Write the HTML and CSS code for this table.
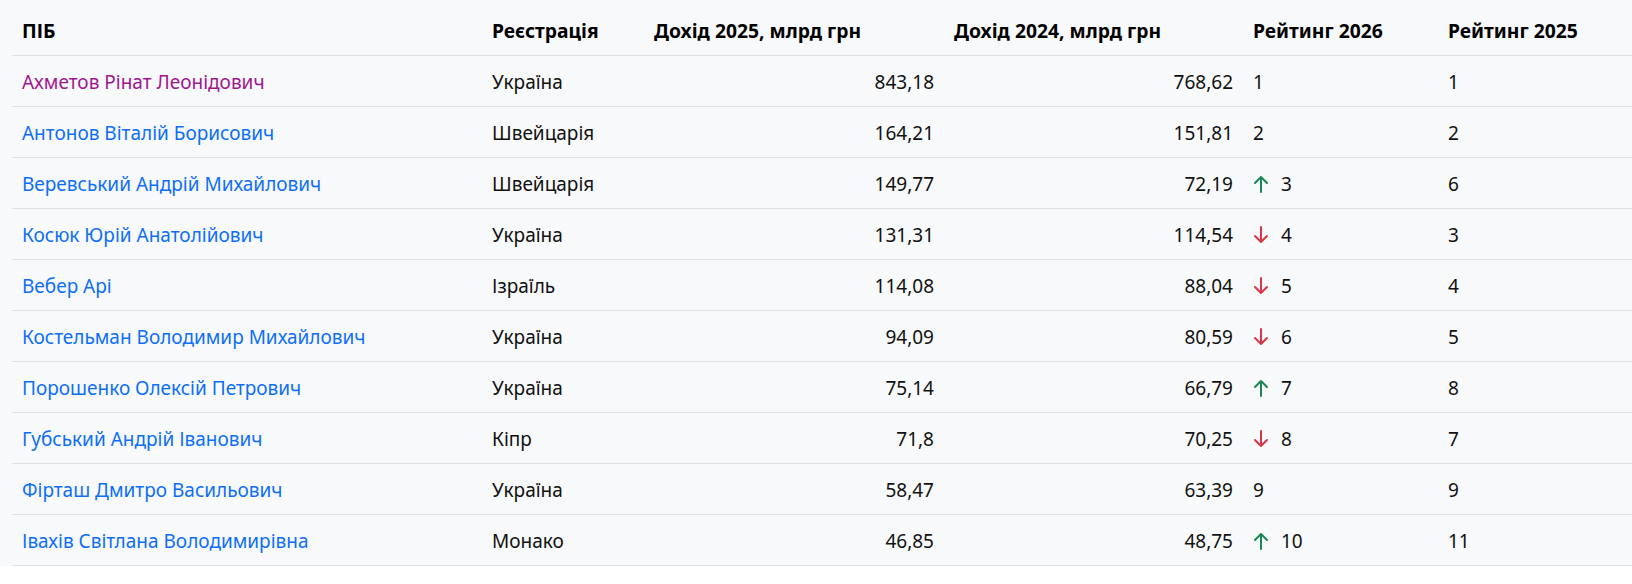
FILE: index.html
```html
<!DOCTYPE html>
<html lang="uk">
<head>
<meta charset="utf-8">
<title>Рейтинг</title>
<link rel="stylesheet" href="styles.css">
</head>
<body>
<div class="wrap">
<table class="rating">
<colgroup>
<col class="c-name"><col class="c-reg"><col class="c-inc"><col class="c-inc2"><col class="c-r26"><col class="c-r25">
</colgroup>
<thead>
<tr><th>ПІБ</th><th>Реєстрація</th><th>Дохід 2025, млрд грн</th><th>Дохід 2024, млрд грн</th><th>Рейтинг 2026</th><th>Рейтинг 2025</th></tr>
</thead>
<tbody>
<tr><td><a class="visited" href="#">Ахметов Рінат Леонідович</a></td><td>Україна</td><td class="num">843,18</td><td class="num">768,62</td><td>1</td><td>1</td></tr>
<tr><td><a href="#">Антонов Віталій Борисович</a></td><td>Швейцарія</td><td class="num">164,21</td><td class="num">151,81</td><td>2</td><td>2</td></tr>
<tr><td><a href="#">Веревський Андрій Михайлович</a></td><td>Швейцарія</td><td class="num">149,77</td><td class="num">72,19</td><td><span class="rank"><svg class="arr up" viewBox="0 0 16 18"><path d="M8 17V2M2 8l6-6 6 6"/></svg>3</span></td><td>6</td></tr>
<tr><td><a href="#">Косюк Юрій Анатолійович</a></td><td>Україна</td><td class="num">131,31</td><td class="num">114,54</td><td><span class="rank"><svg class="arr down" viewBox="0 0 16 18"><path d="M8 1v15M2 10l6 6 6-6"/></svg>4</span></td><td>3</td></tr>
<tr><td><a href="#">Вебер Арі</a></td><td>Ізраїль</td><td class="num">114,08</td><td class="num">88,04</td><td><span class="rank"><svg class="arr down" viewBox="0 0 16 18"><path d="M8 1v15M2 10l6 6 6-6"/></svg>5</span></td><td>4</td></tr>
<tr><td><a href="#">Костельман Володимир Михайлович</a></td><td>Україна</td><td class="num">94,09</td><td class="num">80,59</td><td><span class="rank"><svg class="arr down" viewBox="0 0 16 18"><path d="M8 1v15M2 10l6 6 6-6"/></svg>6</span></td><td>5</td></tr>
<tr><td><a href="#">Порошенко Олексій Петрович</a></td><td>Україна</td><td class="num">75,14</td><td class="num">66,79</td><td><span class="rank"><svg class="arr up" viewBox="0 0 16 18"><path d="M8 17V2M2 8l6-6 6 6"/></svg>7</span></td><td>8</td></tr>
<tr><td><a href="#">Губський Андрій Іванович</a></td><td>Кіпр</td><td class="num">71,8</td><td class="num">70,25</td><td><span class="rank"><svg class="arr down" viewBox="0 0 16 18"><path d="M8 1v15M2 10l6 6 6-6"/></svg>8</span></td><td>7</td></tr>
<tr><td><a href="#">Фірташ Дмитро Васильович</a></td><td>Україна</td><td class="num">58,47</td><td class="num">63,39</td><td>9</td><td>9</td></tr>
<tr><td><a href="#">Івахів Світлана Володимирівна</a></td><td>Монако</td><td class="num">46,85</td><td class="num">48,75</td><td><span class="rank"><svg class="arr up" viewBox="0 0 16 18"><path d="M8 17V2M2 8l6-6 6 6"/></svg>10</span></td><td>11</td></tr>
</tbody>
</table>
</div>
</body>
</html>
```

FILE: styles.css
```css
html, body {
  margin: 0;
  padding: 0;
  background: #ffffff;
}
body {
  font-family: "Noto Sans", "Open Sans", sans-serif;
  font-size: 19px;
  color: #212529;
}
.wrap {
  background: #f8f9fa;
  padding-left: 12px;
  overflow: hidden;
}
.rating {
  width: 1620px;
  table-layout: fixed;
  border-collapse: collapse;
}
.c-name { width: 470px; }
.c-reg { width: 162px; }
.c-inc { width: 300px; }
.c-inc2 { width: 299px; }
.c-r26 { width: 195px; }
.c-r25 { width: 194px; }
.rating th {
  text-align: left;
  font-weight: 700;
  font-size: 19.3px;
  color: #000;
  line-height: 24px;
  height: 24px;
  padding: 19px 10px 12px;
  border-bottom: 1px solid #dee2e6;
  white-space: nowrap;
}
.rating td {
  line-height: 24px;
  height: 24px;
  padding: 14px 10px 12px;
  border-bottom: 1px solid #dee2e6;
  white-space: nowrap;
  color: #111;
}
.rating td.num {
  text-align: right;
}
.rating a {
  color: #0d6efd;
  text-decoration: none;
}
.rating a.visited {
  color: #a0168f;
}
.rank {
  display: flex;
  align-items: center;
  height: 24px;
  gap: 12px;
}
.arr {
  display: block;
  flex: none;
  width: 16px;
  height: 18px;
  fill: none;
  stroke: currentColor;
  stroke-width: 2;
  stroke-linecap: round;
  stroke-linejoin: round;
}
.arr.up { color: #198754; }
.arr.down { color: #dc3545; }
```
